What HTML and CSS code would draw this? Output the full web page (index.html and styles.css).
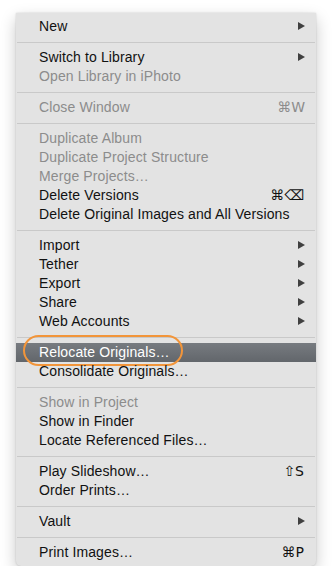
FILE: index.html
```html
<!DOCTYPE html>
<html lang="en">
<head>
    <meta charset="UTF-8">
    <meta name="viewport" content="width=device-width, initial-scale=1.0">
    <title>File Menu</title>
    <link rel="stylesheet" href="styles.css">
</head>
<body>
    <div class="menu">
        <div class="item"><span class="label">New</span><span class="arrow"></span></div>
        <div class="sep"></div>
        <div class="item"><span class="label">Switch to Library</span><span class="arrow"></span></div>
        <div class="item off"><span class="label">Open Library in iPhoto</span></div>
        <div class="sep"></div>
        <div class="item off"><span class="label">Close Window</span><span class="key">⌘W</span></div>
        <div class="sep"></div>
        <div class="item off"><span class="label">Duplicate Album</span></div>
        <div class="item off"><span class="label">Duplicate Project Structure</span></div>
        <div class="item off"><span class="label">Merge Projects…</span></div>
        <div class="item"><span class="label">Delete Versions</span><span class="key">⌘⌫</span></div>
        <div class="item"><span class="label">Delete Original Images and All Versions</span></div>
        <div class="sep"></div>
        <div class="item"><span class="label">Import</span><span class="arrow"></span></div>
        <div class="item"><span class="label">Tether</span><span class="arrow"></span></div>
        <div class="item"><span class="label">Export</span><span class="arrow"></span></div>
        <div class="item"><span class="label">Share</span><span class="arrow"></span></div>
        <div class="item"><span class="label">Web Accounts</span><span class="arrow"></span></div>
        <div class="sep"></div>
        <div class="item active"><span class="label">Relocate Originals…</span><span class="ring"></span></div>
        <div class="item"><span class="label">Consolidate Originals…</span></div>
        <div class="sep"></div>
        <div class="item off"><span class="label">Show in Project</span></div>
        <div class="item"><span class="label">Show in Finder</span></div>
        <div class="item"><span class="label">Locate Referenced Files…</span></div>
        <div class="sep"></div>
        <div class="item"><span class="label">Play Slideshow…</span><span class="key">⇧S</span></div>
        <div class="item"><span class="label">Order Prints…</span></div>
        <div class="sep"></div>
        <div class="item"><span class="label">Vault</span><span class="arrow"></span></div>
        <div class="sep"></div>
        <div class="item"><span class="label">Print Images…</span><span class="key">⌘P</span></div>
    </div>
</body>
</html>
```

FILE: styles.css
```css
* {
    margin: 0;
    padding: 0;
    box-sizing: border-box;
}

body {
    font-family: 'Liberation Sans', Arial, sans-serif;
    background: #fff;
    padding: 13px 0 0 16px;
}

.menu {
    width: 300px;
    background: #e3e3e3;
    padding: 4px 0;
    border-radius: 0 0 5px 5px;
    box-shadow: 0 6px 16px rgba(0, 0, 0, 0.22), 0 0 2px rgba(0, 0, 0, 0.18);
    font-size: 14px;
    letter-spacing: 0.12px;
    color: #111;
}

.item {
    position: relative;
    display: flex;
    align-items: center;
    justify-content: space-between;
    height: 19px;
    padding: 0 11px 1px 23px;
}

.item.off {
    color: #8c8c8c;
}

.item.active {
    background: linear-gradient(#777b80, #62666b);
    color: #fff;
}

.key {
    font-family: 'DejaVu Sans', sans-serif;
    font-size: 14px;
    letter-spacing: 0;
    margin-right: 1px;
}

.item.off .key {
    margin-right: 0;
}

.arrow {
    width: 0;
    height: 0;
    border-top: 4.5px solid transparent;
    border-bottom: 4.5px solid transparent;
    border-left: 7px solid #404040;
}

.sep {
    height: 12px;
    display: flex;
    align-items: center;
    padding: 0 1px;
}

.sep::before {
    content: '';
    flex: 1;
    height: 1px;
    background: #c9c9c9;
}

/* orange annotation ring */
.ring {
    position: absolute;
    left: 7px;
    top: -8px;
    width: 160px;
    height: 31px;
    border: 2px solid #f2953a;
    border-radius: 16px;
}
```
